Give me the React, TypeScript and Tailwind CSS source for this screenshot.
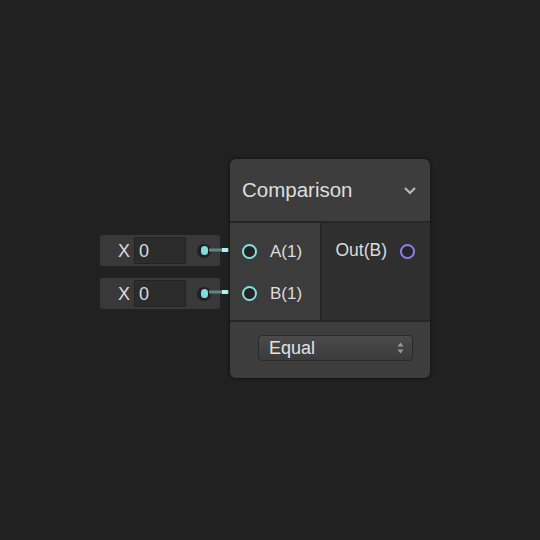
import React from "react";

const font = { fontFamily: '"Liberation Sans", Arial, sans-serif' };

function InPort() {
  return (
    <span className="box-border w-[15px] h-[15px] rounded-full border-2 border-[#86dede] bg-[#232323] shrink-0" />
  );
}

function InlineValue({ top }: { top: number }) {
  return (
    <div
      className="absolute left-[100px] w-[120px] h-[31px] bg-[#393939] rounded-[2px] flex items-center"
      style={{ top }}
    >
      <span className="w-[34px] text-right pr-[4px] text-[18px] text-[#dcdcdc] leading-none">X</span>
      <div className="w-[52px] h-[27px] bg-[#2c2c2c] border border-[#242424] flex items-center pl-[4px] text-[18px] text-[#dcdcdc] leading-none">
        0
      </div>
      <div className="ml-[11px] w-[14px] h-[14px] rounded-full bg-[#202020] flex items-center justify-center">
        <span className="w-[7px] h-[9px] rounded-full bg-[#80dcdc]" />
      </div>
    </div>
  );
}

export default function App() {
  return (
    <div className="relative w-[540px] h-[540px] bg-[#212121] overflow-hidden" style={font}>
      <InlineValue top={235} />
      <InlineValue top={278} />

      {/* wires */}
      <svg className="absolute left-0 top-0" width="540" height="540">
        {[250, 292].map((y) => (
          <g key={y}>
            <rect x="209" y={y - 1.5} width="34" height="3" fill="#5f8585" />
            <rect x="222" y={y - 2} width="6" height="4" fill="#b4f0f0" />
          </g>
        ))}
      </svg>

      {/* node */}
      <div className="absolute left-[229px] top-[158px] w-[202px] rounded-[7px] border border-[#181818] bg-[#3d3d3d] overflow-hidden shadow-[0_0_3px_rgba(0,0,0,0.4)]">
        <div className="h-[62px] flex items-center justify-between pl-[12px] pr-[13px]">
          <span className="text-[20.5px] text-[#dedede] leading-none">Comparison</span>
          <svg width="14" height="9" viewBox="0 0 14 9">
            <path d="M2 2 L7 7 L12 2" fill="none" stroke="#b8b8b8" strokeWidth="2.2" />
          </svg>
        </div>
        <div className="h-[2px] bg-[#262626]" />
        <div className="flex h-[97px]">
          <div className="w-[92px] bg-[#3c3c3c] border-r-2 border-[#262626] flex flex-col pt-[20px] gap-[26px] pl-[12px]">
            <div className="flex items-center h-[16px] gap-[13px]">
              <InPort />
              <span className="text-[17px] text-[#dcdcdc] leading-none">A(1)</span>
            </div>
            <div className="flex items-center h-[16px] gap-[13px]">
              <InPort />
              <span className="text-[17px] text-[#dcdcdc] leading-none">B(1)</span>
            </div>
          </div>
          <div className="flex-1 bg-[#2f2f2f] pt-[20px]">
            <div className="flex items-center h-[16px] justify-end pr-[15px] gap-[13px]">
              <span className="text-[17.5px] text-[#dcdcdc] leading-none">Out(B)</span>
              <span className="box-border w-[15px] h-[15px] rounded-full border-2 border-[#8f80e6] bg-[#262626]" />
            </div>
          </div>
        </div>
        <div className="h-[2px] bg-[#262626]" />
        <div className="h-[56px] flex items-start pt-[13px] pl-[28px]">
          <div className="w-[155px] h-[26px] rounded-[4px] border border-[#2a2a2a] bg-gradient-to-b from-[#4a4a4a] to-[#3b3b3b] flex items-center justify-between pl-[10px] pr-[8px]">
            <span className="text-[18px] text-[#e2e2e2] leading-none">Equal</span>
            <svg width="7" height="14" viewBox="0 0 7 14">
              <path d="M0.5 5.5 L3.5 1.5 L6.5 5.5 Z" fill="#9a9a9a" />
              <path d="M0.5 8.5 L3.5 12.5 L6.5 8.5 Z" fill="#9a9a9a" />
            </svg>
          </div>
        </div>
      </div>
    </div>
  );
}
